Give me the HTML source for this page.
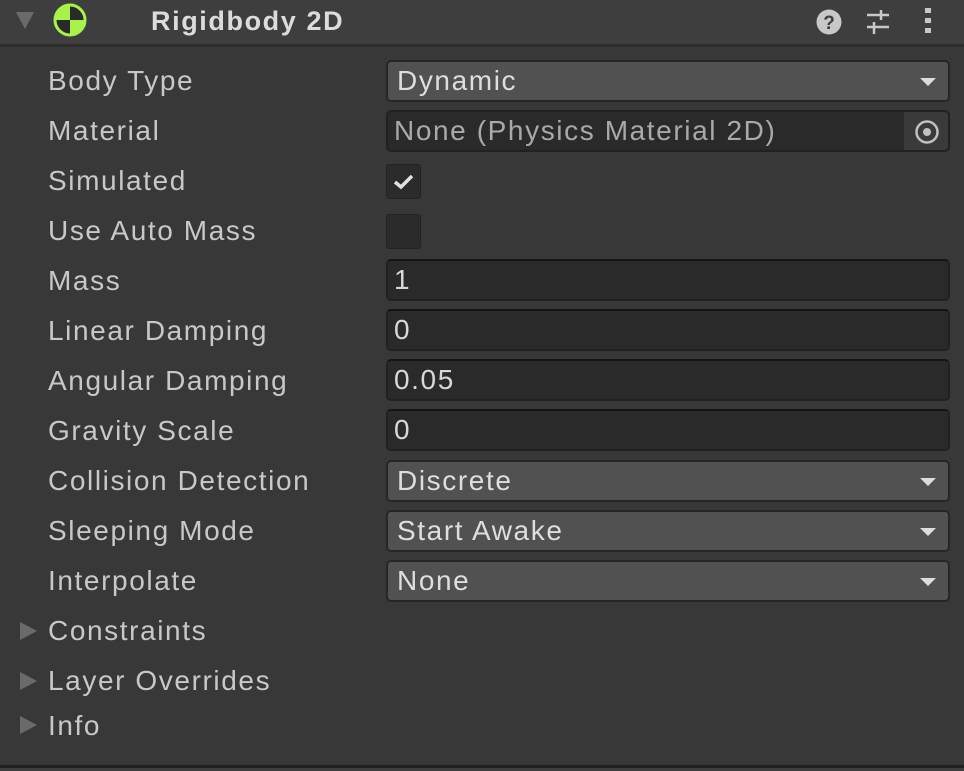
<!DOCTYPE html><html><head><style>
body{margin:0;width:964px;height:771px;background:#383838;font-family:"Liberation Sans",sans-serif;overflow:hidden;position:relative;color:#c8c8c8}
.hdr{position:absolute;left:0;top:0;width:964px;height:44px;background:#3e3e3e;border-bottom:3px solid #2d2d2d}
.t{position:absolute;font-size:28px;letter-spacing:1.6px;white-space:nowrap}
.lbl{left:48px}
.dd{position:absolute;left:386px;width:560px;height:38px;background:#515151;border:2px solid #262626;border-radius:5px}
.dd span{position:absolute;left:9px;top:3px;font-size:28px;letter-spacing:1.6px;color:#dedede}
.dd i{position:absolute;right:12px;top:16px;width:0;height:0;border-left:8px solid transparent;border-right:8px solid transparent;border-top:8px solid #ddd}
.tf{position:absolute;left:386px;width:560px;height:38px;background:#2a2a2a;border:2px solid #212121;border-top-color:#141414;border-radius:5px}
.tf span{position:absolute;left:6px;top:3px;font-size:28px;letter-spacing:1.6px;color:#d8d8d8}
.cb{position:absolute;left:386px;width:33px;height:33px;background:#2b2b2b;border:1px solid #222;border-radius:3px}
.tri{position:absolute;left:20px;width:0;height:0;border-top:9px solid transparent;border-bottom:9px solid transparent;border-left:17px solid #6a6a6a}
</style></head><body>
<div class="hdr"></div>
<div style="position:absolute;left:16px;top:12px;width:0;height:0;border-left:9px solid transparent;border-right:9px solid transparent;border-top:17px solid #6a6a6a"></div>
<svg style="position:absolute;left:52px;top:2px" width="36" height="36" viewBox="0 0 36 36"><circle cx="18" cy="18" r="16" fill="#a8f24a"/><path d="M18 18 V4 A14 14 0 0 1 32 18 Z" fill="#2a2a2a"/><path d="M18 18 V32 A14 14 0 0 1 4 18 Z" fill="#2a2a2a"/><circle cx="18" cy="18" r="15" fill="none" stroke="#a8f24a" stroke-width="3"/></svg>
<div class="t" style="left:151px;top:6px;font-weight:bold;font-size:27px;color:#dcdcdc">Rigidbody 2D</div>
<svg style="position:absolute;left:815px;top:8px" width="28" height="28" viewBox="0 0 28 28"><circle cx="14" cy="14" r="12.5" fill="#c8c8c8"/><text x="14" y="21" font-size="19" font-weight="bold" text-anchor="middle" fill="#3e3e3e" font-family="Liberation Sans">?</text></svg>
<svg style="position:absolute;left:865px;top:8px" width="28" height="28" viewBox="0 0 28 28" stroke="#c8c8c8" stroke-width="2.5"><path d="M2 7H24M16 2V12M2 19H24M9 14V26"/></svg>
<svg style="position:absolute;left:922px;top:7px" width="12" height="28" viewBox="0 0 12 28" fill="#c8c8c8"><rect x="3" y="1" width="6" height="5"/><rect x="3" y="11" width="6" height="5"/><rect x="3" y="21" width="6" height="5"/></svg>

<div class="t lbl" style="top:65px">Body Type</div>
<div class="dd" style="top:60px"><span>Dynamic</span><i></i></div>
<div class="t lbl" style="top:115px">Material</div>
<div class="tf" style="top:110px;border-top-color:#212121"><span style="color:#a9a9a9">None (Physics Material 2D)</span><div style="position:absolute;right:0;top:0;width:44px;height:38px;background:#3a3a3a;border-radius:0 4px 4px 0"></div><svg style="position:absolute;right:8px;top:7px" width="26" height="26" viewBox="0 0 26 26"><circle cx="13" cy="13" r="10.5" fill="none" stroke="#c0c0c0" stroke-width="2.5"/><circle cx="13" cy="13" r="4" fill="#c0c0c0"/></svg></div>
<div class="t lbl" style="top:165px">Simulated</div>
<div class="cb" style="top:164px"><svg width="33" height="33" viewBox="0 0 33 33"><path d="M8 17 L14 22 L25 11" fill="none" stroke="#e0e0e0" stroke-width="3.5"/></svg></div>
<div class="t lbl" style="top:215px">Use Auto Mass</div>
<div class="cb" style="top:214px"></div>
<div class="t lbl" style="top:265px">Mass</div>
<div class="tf" style="top:259px"><span>1</span></div>
<div class="t lbl" style="top:315px">Linear Damping</div>
<div class="tf" style="top:309px"><span>0</span></div>
<div class="t lbl" style="top:365px">Angular Damping</div>
<div class="tf" style="top:359px"><span>0.05</span></div>
<div class="t lbl" style="top:415px">Gravity Scale</div>
<div class="tf" style="top:409px"><span>0</span></div>
<div class="t lbl" style="top:465px">Collision Detection</div>
<div class="dd" style="top:460px"><span>Discrete</span><i></i></div>
<div class="t lbl" style="top:515px">Sleeping Mode</div>
<div class="dd" style="top:510px"><span>Start Awake</span><i></i></div>
<div class="t lbl" style="top:565px">Interpolate</div>
<div class="dd" style="top:560px"><span>None</span><i></i></div>
<div class="tri" style="top:622px"></div><div class="t lbl" style="top:615px">Constraints</div>
<div class="tri" style="top:672px"></div><div class="t lbl" style="top:665px">Layer Overrides</div>
<div class="tri" style="top:716px"></div><div class="t lbl" style="top:710px">Info</div>
<div style="position:absolute;left:0;top:765px;width:964px;height:3px;background:#202020"></div>
<div style="position:absolute;left:0;top:768px;width:964px;height:3px;background:#3e3e3e"></div>
</body></html>
